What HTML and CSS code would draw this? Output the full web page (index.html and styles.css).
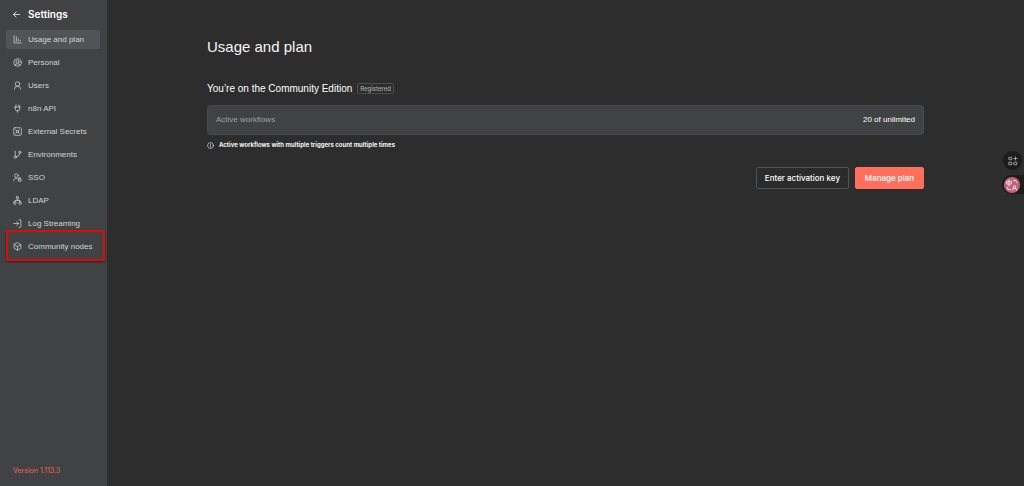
FILE: index.html
```html
<!DOCTYPE html>
<html lang="en">
<head>
<meta charset="utf-8">
<meta name="viewport" content="width=device-width, initial-scale=1">
<title>Settings - Usage and plan</title>
<link rel="stylesheet" href="styles.css">
</head>
<body>
<div class="app">
  <aside class="sidebar">
    <a class="back" href="#">
      <svg class="icon" viewBox="0 0 24 24"><path d="M20 12H4M11 5l-7 7 7 7"/></svg>
      <span>Settings</span>
    </a>
    <nav class="menu" aria-label="Settings">
      <a class="item active" href="#" aria-current="page">
        <svg class="icon" viewBox="0 0 24 24"><path d="M3 2v19h19M9 5v11M14 11v5M19 14v2"/></svg>
        <span>Usage and plan</span>
      </a>
      <a class="item" href="#">
        <svg class="icon" viewBox="0 0 24 24"><circle cx="12" cy="12" r="10"/><circle cx="12" cy="10" r="4"/><path d="M6 20v-1a3 3 0 0 1 3-3h6a3 3 0 0 1 3 3v1"/></svg>
        <span>Personal</span>
      </a>
      <a class="item" href="#">
        <svg class="icon" viewBox="0 0 24 24"><circle cx="12" cy="8" r="6"/><path d="M4 22v-1a8 7 0 0 1 16 0v1"/></svg>
        <span>Users</span>
      </a>
      <a class="item" href="#">
        <svg class="icon" viewBox="0 0 24 24"><path d="M8 7V2M16 7V2M4 8h16M6 8v5a5 5 0 0 0 5 5h2a5 5 0 0 0 5-5V8M12 18v4"/></svg>
        <span>n8n API</span>
      </a>
      <a class="item" href="#">
        <svg class="icon" viewBox="0 0 24 24"><rect x="2" y="2" width="20" height="20" rx="2"/><circle cx="12" cy="12" r="3"/><path d="M7 7l3 3M14 14l3 3M17 7l-3 3M10 14l-3 3"/></svg>
        <span>External Secrets</span>
      </a>
      <a class="item" href="#">
        <svg class="icon" viewBox="0 0 24 24"><path d="M6 3v13M18 9a9 9 0 0 1-9 9"/><circle cx="18" cy="6" r="3"/><circle cx="6" cy="19" r="3"/></svg>
        <span>Environments</span>
      </a>
      <a class="item" href="#">
        <svg class="icon" viewBox="0 0 24 24"><circle cx="9" cy="7" r="5"/><path d="M2 21v-1a7 7 0 0 1 9-6"/><rect x="14" y="16" width="8" height="6" rx="1"/><path d="M16 16v-2a2 2 0 0 1 4 0v2"/></svg>
        <span>SSO</span>
      </a>
      <a class="item" href="#">
        <svg class="icon" viewBox="0 0 24 24"><rect x="9" y="2" width="6" height="6" rx="1"/><rect x="2" y="16" width="6" height="6" rx="1"/><rect x="16" y="16" width="6" height="6" rx="1"/><path d="M5 16v-4h14v4M12 12V8"/></svg>
        <span>LDAP</span>
      </a>
      <a class="item" href="#">
        <svg class="icon" viewBox="0 0 24 24"><path d="M2 12h13M10 7l5 5-5 5M16 2h3a2 2 0 0 1 2 2v16a2 2 0 0 1-2 2h-3"/></svg>
        <span>Log Streaming</span>
      </a>
      <a class="item marked" href="#">
        <svg class="icon" viewBox="0 0 24 24"><path d="M12 2l9 5v10l-9 5-9-5V7zM3 7l9 5 9-5M12 12v10"/></svg>
        <span>Community nodes</span>
      </a>
    </nav>
    <a class="version" href="#">Version 1.113.3</a>
  </aside>

  <main class="content">
    <h1 class="title">Usage and plan</h1>
    <h2 class="edition">You’re on the Community Edition <span class="badge">Registered</span></h2>
    <div class="quota">
      <span class="quota-label">Active workflows</span>
      <span class="quota-value">20 of unlimited</span>
    </div>
    <p class="note">
      <svg class="note-icon" viewBox="0 0 24 24"><circle cx="12" cy="12" r="10"/><path d="M12 17v-6M12 7v1"/></svg>
      <span>Active workflows with multiple triggers count multiple times</span>
    </p>
    <div class="actions">
      <button class="button" type="button">Enter activation key</button>
      <button class="button primary" type="button">Manage plan</button>
    </div>
  </main>
</div>

<div class="tools">
  <button class="tool" type="button" aria-label="Apps">
    <svg class="tool-icon" viewBox="0 0 24 24"><rect x="3" y="3" width="6" height="6"/><rect x="3" y="15" width="6" height="6"/><rect x="15" y="15" width="6" height="6"/><path d="M18 2v8M14 6h8"/></svg>
  </button>
  <button class="tool translate" type="button" aria-label="Translate">
    <svg class="translate-icon" viewBox="0 0 32 32"><circle cx="16" cy="16" r="16" fill="#c0627f" stroke="none"/><path d="M6 9h9v5H6zM10 6v12M19 7h3a3 3 0 0 1 3 3v1M7 21v1a3 3 0 0 0 3 3h3M17 26l4-10 4 10M19 23h4"/></svg>
  </button>
</div>
</body>
</html>
```
FILE: styles.css
```css
* {
  box-sizing: border-box;
}

body {
  margin: 0;
  background: #2d2d2d;
  color: #f4f4f4;
  font-family: "Liberation Sans", Arial, sans-serif;
  font-size: 8px;
  line-height: 12px;
}

a {
  color: inherit;
  text-decoration: none;
}

svg {
  flex: none;
  fill: none;
  stroke: currentColor;
  stroke-width: 2;
  stroke-linecap: round;
  stroke-linejoin: round;
}

.app {
  display: flex;
  min-height: 100vh;
}

.sidebar {
  display: flex;
  flex: none;
  flex-direction: column;
  width: 107px;
  padding: 7px 7px 9px 6px;
  background: #414244;
}

.back {
  display: flex;
  align-items: center;
  gap: 7px;
  padding: 0 6px;
  color: #ffffff;
  font-family: Inter, sans-serif;
  font-size: 10px;
  font-weight: 600;
  line-height: 15px;
}

.icon {
  width: 9px;
  height: 9px;
}

.menu {
  display: flex;
  flex-direction: column;
  gap: 4px;
  margin-top: 8px;
}

.item {
  position: relative;
  display: flex;
  align-items: center;
  gap: 6px;
  height: 19px;
  padding: 0 7px;
  border-radius: 2px;
  color: #d2d3d5;
  white-space: nowrap;
}

.active {
  background: #525356;
}

.marked::after {
  position: absolute;
  inset: -7px -5px -5px 0;
  border: 2px solid #dc0c0c;
  border-radius: 2px;
  box-shadow: 0 1px 2px #00000080;
  content: "";
}

.version {
  margin-top: auto;
  padding: 0 7px;
  color: #ee6259;
  font-family: Inter, sans-serif;
  font-size: 7px;
}

.content {
  flex: 1;
  padding: 37px 100px;
}

.title {
  margin: 0;
  font-size: 15px;
  font-weight: 400;
  line-height: 20px;
}

.edition {
  display: flex;
  align-items: center;
  gap: 5px;
  margin: 25px 0 10px;
  color: #ffffff;
  font-size: 10px;
  font-weight: 500;
  line-height: 13px;
}

.badge {
  padding: 0 2px;
  border: 1px solid #4c4d4f;
  border-radius: 2px;
  color: #a9aaac;
  font-family: Inter, sans-serif;
  font-size: 6px;
  font-weight: 500;
  line-height: 9px;
}

.quota {
  display: flex;
  align-items: center;
  justify-content: space-between;
  height: 30px;
  padding: 0 8px;
  border: 1px solid #4a4b4d;
  border-radius: 4px;
  background: #414244;
}

.quota-label {
  color: #a0a1a4;
}

.quota-value {
  color: #ffffff;
}

.note {
  display: flex;
  align-items: center;
  gap: 5px;
  margin: 4px 0 16px;
  font-family: Inter, sans-serif;
  font-size: 6px;
  font-weight: 700;
}

.note-icon {
  width: 7px;
  height: 7px;
}

.actions {
  display: flex;
  justify-content: flex-end;
  gap: 6px;
}

.button {
  min-width: 69px;
  height: 22px;
  padding: 0 8px;
  border: 1px solid #505254;
  border-radius: 2px;
  background: #2b2b2b;
  color: #ffffff;
  font-family: Inter, sans-serif;
  font-size: 8px;
  font-weight: 500;
}

.primary {
  border-color: #ff6f5c;
  background: #ff6f5c;
}

.tools {
  position: fixed;
  top: 151px;
  right: 0;
  display: flex;
  flex-direction: column;
  align-items: flex-end;
  gap: 5px;
}

.tool {
  display: flex;
  align-items: center;
  justify-content: center;
  width: 19px;
  height: 19px;
  margin-right: 2px;
  padding: 0;
  border: 0;
  border-radius: 10px;
  background: #1c1c1c;
  color: #b0b0b0;
}

.tool-icon {
  width: 10px;
  height: 10px;
}

.translate {
  justify-content: flex-start;
  width: 22px;
  margin-right: 0;
  padding-left: 2px;
  border-radius: 10px 0 0 10px;
  color: #f3dce3;
}

.translate-icon {
  width: 16px;
  height: 16px;
}
```
